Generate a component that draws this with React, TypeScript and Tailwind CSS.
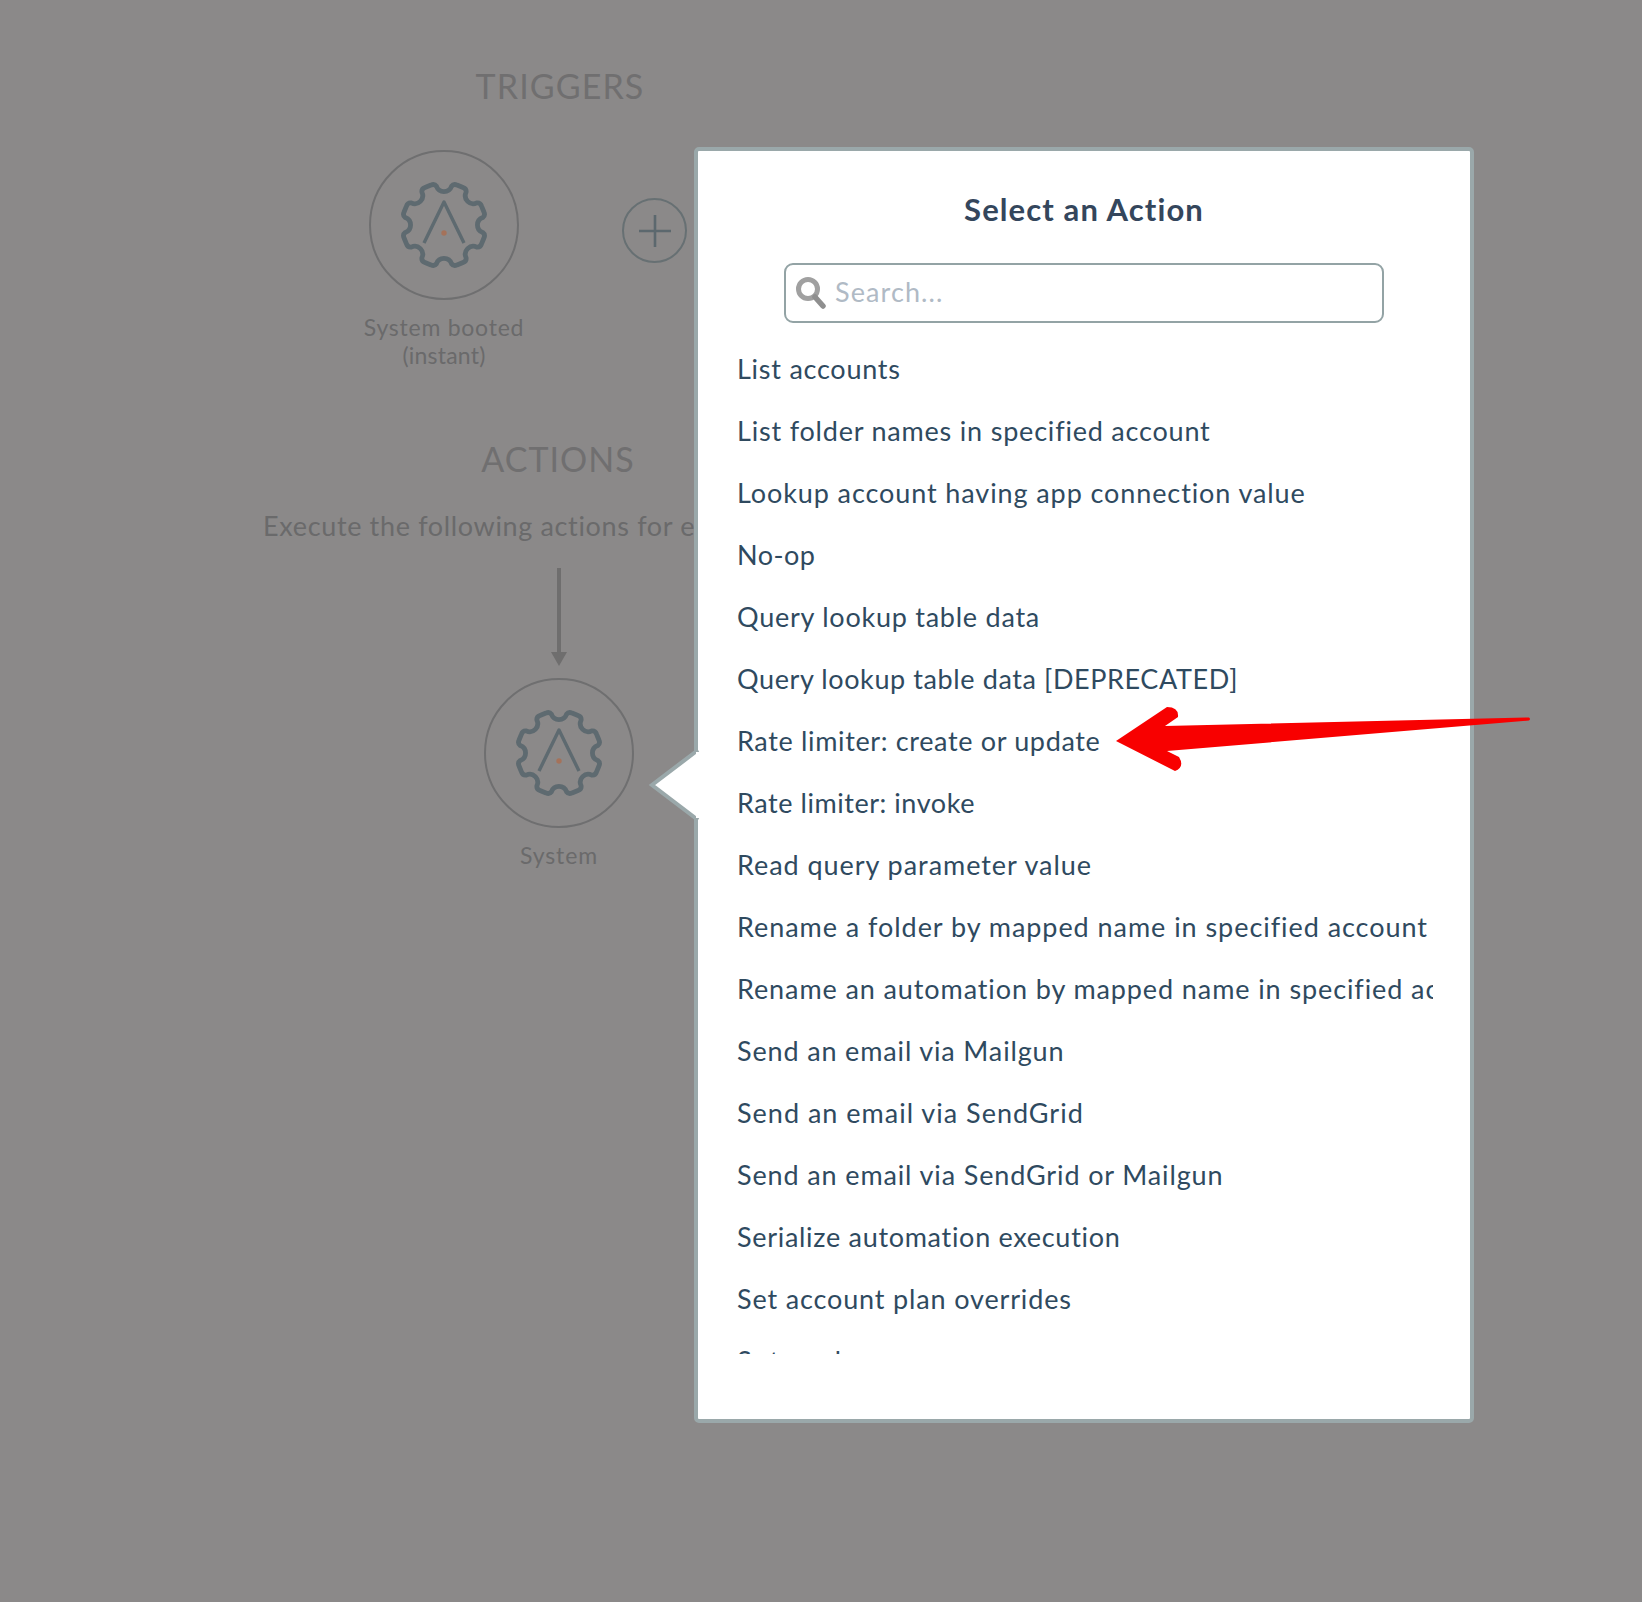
import React from "react";

const FONT = "font-['Lato','Noto_Sans',sans-serif]";

const items: [string, string][] = [
  ["List accounts", "tracking-[0.75px]"],
  ["List folder names in specified account", "tracking-[0.8px]"],
  ["Lookup account having app connection value", "tracking-[0.9px]"],
  ["No-op", "tracking-[0.5px]"],
  ["Query lookup table data", "tracking-[0.75px]"],
  ["Query lookup table data [DEPRECATED]", "tracking-[0.6px]"],
  ["Rate limiter: create or update", "tracking-[0.65px]"],
  ["Rate limiter: invoke", "tracking-[0.55px]"],
  ["Read query parameter value", "tracking-[0.95px]"],
  ["Rename a folder by mapped name in specified account", "tracking-[0.95px]"],
  ["Rename an automation by mapped name in specified account", "tracking-[0.9px]"],
  ["Send an email via Mailgun", "tracking-[0.85px]"],
  ["Send an email via SendGrid", "tracking-[1px]"],
  ["Send an email via SendGrid or Mailgun", "tracking-[0.87px]"],
  ["Serialize automation execution", "tracking-[0.7px]"],
  ["Set account plan overrides", "tracking-[0.85px]"],
  ["Set cache", "tracking-[1.9px]"],
];

function pt(R: number, deg: number) {
  const a = (deg * Math.PI) / 180;
  return `${(R * Math.cos(a)).toFixed(2)} ${(R * Math.sin(a)).toFixed(2)}`;
}

function gearPath() {
  const R = 42;
  const half = 11;
  let d = "";
  for (let i = 0; i < 8; i++) {
    const c = i * 45 - 90;
    // rounded shoulder into the notch, the notch itself, rounded shoulder out of it
    d += `${i === 0 ? "M" : "L"}${pt(R, c - half - 7)} `;
    d += `Q${pt(R + 0.6, c - half - 2)} ${pt(R - 2.5, c - half)} `;
    d += `A8 8 0 0 0 ${pt(R - 2.5, c + half)} `;
    d += `Q${pt(R + 0.6, c + half + 2)} ${pt(R, c + half + 7)} `;
  }
  return d + "Z";
}

function Gear() {
  return (
    <div className="w-[150px] h-[150px] shrink-0 rounded-full border-2 border-[#6f6f70] flex items-center justify-center">
      <svg width="100" height="100" viewBox="-50 -50 100 100" fill="none">
        <path d={gearPath()} stroke="#5e6a70" strokeWidth="4.8" strokeLinejoin="round" />
        <path d="M-20 18 L0 -23 L20 18" stroke="#5e6a70" strokeWidth="3.4" strokeLinejoin="round" />
        <circle cx="0" cy="8" r="2.7" fill="#a5725a" />
      </svg>
    </div>
  );
}

export default function App() {
  return (
    <div className={`relative w-[1642px] h-[1602px] overflow-hidden bg-[#8b8989] ${FONT}`}>
      {/* background canvas */}
      <div className="ml-[259px] w-[600px] pt-[66px] flex flex-col items-center text-[#6a6a6b]">
        <h2 className="h-[40px] leading-[40px] pl-[2px] text-[34px] tracking-[1.1px] text-[#706f70]">TRIGGERS</h2>
        <div className="w-full mt-[44px] h-[214px] flex items-start pl-[100px]">
          <div className="w-[170px] flex flex-col items-center">
            <Gear />
            <p className="mt-[13px] text-[23px] leading-[28px] tracking-[0.75px] text-center">
              System booted
              <br />
              <span className="tracking-[0.2px]">(instant)</span>
            </p>
          </div>
          <div className="ml-[93px] mt-[48px] w-[65px] h-[65px] rounded-full border-2 border-[#677073] flex items-center justify-center">
            <svg width="34" height="34" viewBox="0 0 34 34" fill="none" stroke="#5c686e" strokeWidth="2.6">
              <path d="M1 17H33M17 1V33" />
            </svg>
          </div>
        </div>
        <h2 className="mt-[75px] h-[40px] leading-[40px] pr-[2px] text-[34px] tracking-[1px] text-[#706f70]">ACTIONS</h2>
        <p className="mt-[30px] w-full h-[34px] leading-[34px] pl-[4px] text-[27px] tracking-[0.65px] whitespace-nowrap">
          Execute the following actions for each trigger event
        </p>
        <svg className="mt-[25px]" width="16" height="98" viewBox="0 0 16 98" fill="#6f6e6e">
          <rect x="6" y="0" width="4" height="86" />
          <path d="M0 84H16L8 98Z" />
        </svg>
        <div className="mt-[12px]">
          <Gear />
        </div>
        <p className="mt-[13px] h-[28px] leading-[28px] text-[23px] tracking-[0.9px]">System</p>
      </div>

      {/* popover */}
      <div className="absolute left-[694px] top-[147px] w-[780px] h-[1276px] bg-white border-4 border-[#9aa8aa] rounded-[5px] flex flex-col items-center">
        <h3 className="mt-[38px] h-[40px] leading-[40px] text-[31px] font-bold tracking-[1.1px] text-[#34465c]">Select an Action</h3>
        <div className="mt-[34px] relative w-[600px] h-[60px] rounded-[9px] border-2 border-[#93a3a5] flex items-center pl-[49px] pb-[2px]">
          <svg className="absolute left-[9px] top-[11px] blur-[0.6px]" width="32" height="34" viewBox="0 0 32 34" fill="none">
            <circle cx="13" cy="13" r="9.5" stroke="#a0a0a0" strokeWidth="5" />
            <path d="M20 21L28 30" stroke="#8f8f8f" strokeWidth="5.5" strokeLinecap="round" />
          </svg>
          <input
            readOnly
            placeholder="Search..."
            className="w-full bg-transparent outline-none text-[27px] leading-[34px] tracking-[1.1px] placeholder:text-[#b0bac5]"
          />
        </div>
        <ul className="mt-[15px] self-start ml-[39px] w-[696px] h-[1016px] overflow-hidden">
          {items.map(([t, track]) => (
            <li key={t} className={`h-[62px] leading-[62px] text-[27px] text-[#2f4a5f] whitespace-nowrap ${track}`}>
              {t}
            </li>
          ))}
        </ul>
      </div>

      {/* popover pointer */}
      <svg className="absolute left-[646px] top-[744px]" width="54" height="82" viewBox="0 0 54 82">
        <path d="M52 6 L6 41 L52 76" fill="#ffffff" stroke="#9aa8aa" strokeWidth="4" />
        <rect x="50" y="8" width="4" height="66" fill="#ffffff" />
      </svg>

      {/* annotation arrow */}
      <svg className="absolute left-[1100px] top-[700px]" width="440" height="80" viewBox="1100 700 440 80">
        <path
          d="M1529 717.5 Q1531 719 1529 720.5 L1167 751 L1179 757 Q1185 767 1175 771 L1116 741 L1167 707 Q1179 707 1178 717 L1165 726 Z"
          fill="#f80000"
        />
      </svg>
    </div>
  );
}
